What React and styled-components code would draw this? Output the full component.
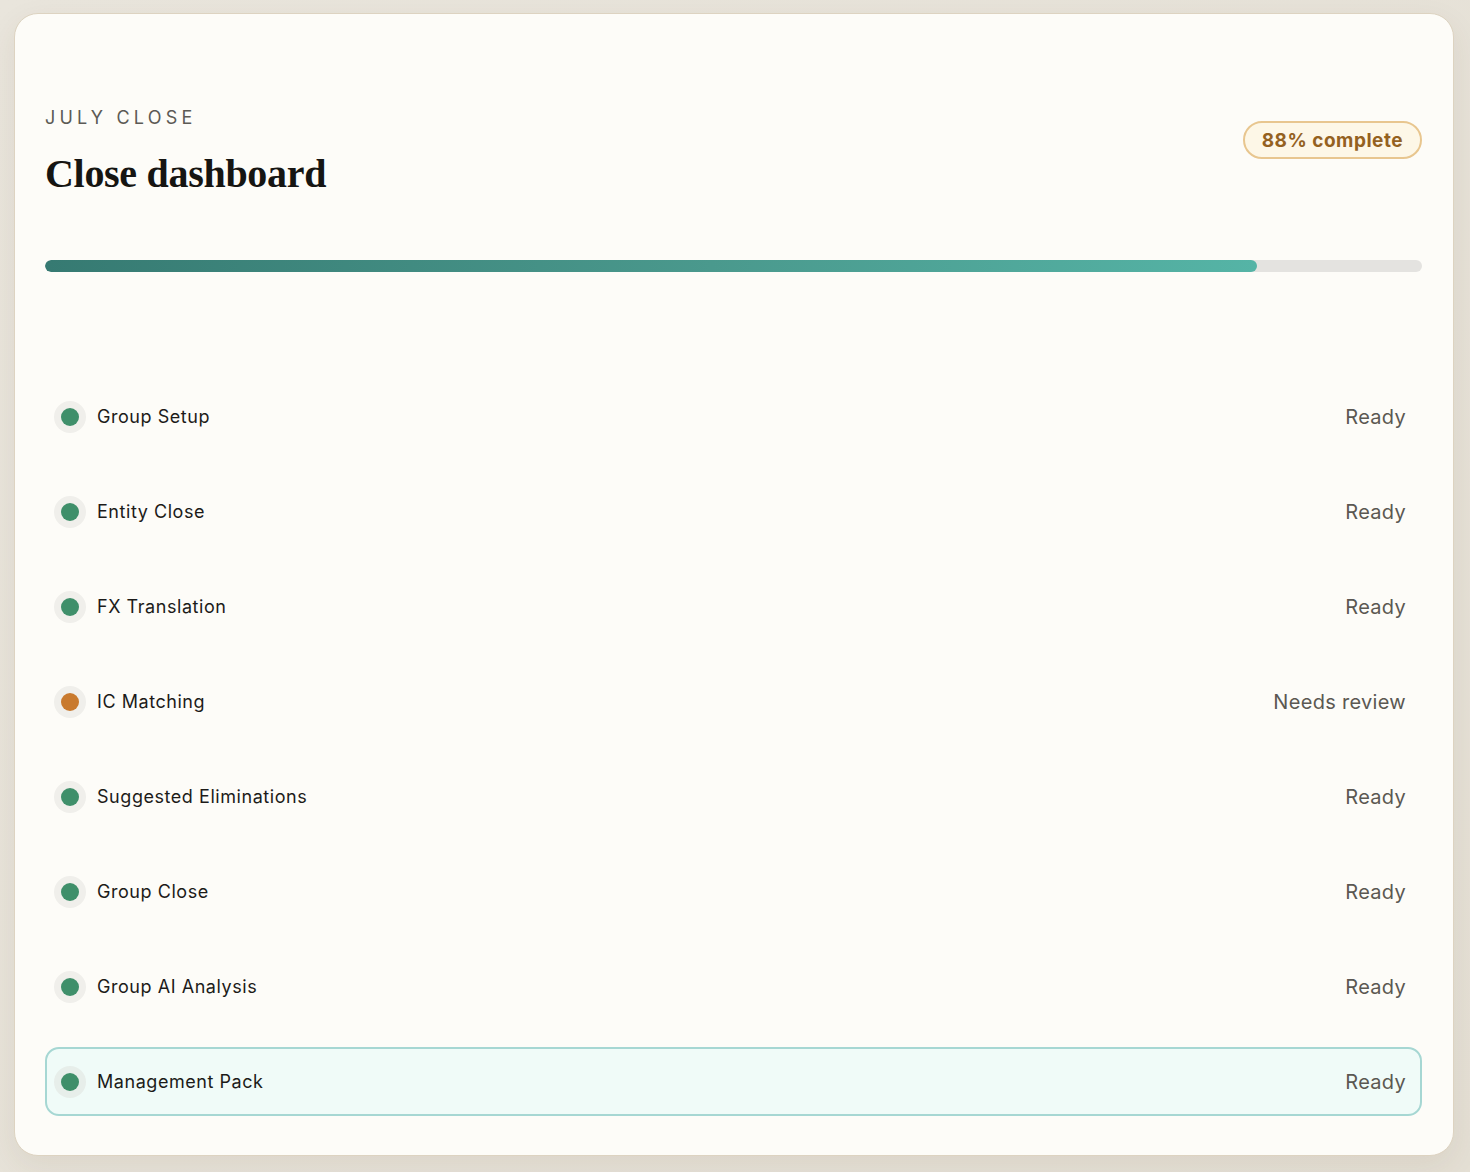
import React from 'react';
import styled, { createGlobalStyle } from 'styled-components';

const GlobalStyle = createGlobalStyle`
  html, body {
    margin: 0;
    padding: 0;
    background: #e7e2d8;
  }
  body {
    font-family: Inter, "Noto Sans", sans-serif;
    -webkit-font-smoothing: antialiased;
  }
`;

const Page = styled.div`
  min-height: 1172px;
  box-sizing: border-box;
  padding: 13px 16px 16px 14px;
  background: linear-gradient(135deg, #e9e5dc 0%, #e4dfd4 100%);
`;

const Card = styled.div`
  box-sizing: border-box;
  height: 1143px;
  background: #fdfcf8;
  border: 1px solid #ddd3c1;
  border-radius: 24px;
  box-shadow: 0 10px 30px rgba(90, 70, 40, 0.08);
  padding: 0 31px 0 30px;
`;

const Header = styled.div`
  display: flex;
  justify-content: space-between;
  align-items: flex-start;
  padding-top: 94px;
`;

const Eyebrow = styled.div`
  font-size: 18px;
  letter-spacing: 4.2px;
  color: #5c5a55;
  line-height: 20px;
`;

const Title = styled.h1`
  margin: 22px 0 0;
  font-family: "Liberation Serif", "Times New Roman", serif;
  font-weight: 700;
  font-size: 40px;
  line-height: 48px;
  color: #161512;
  letter-spacing: -0.3px;
`;

const Badge = styled.div`
  margin-top: 13px;
  height: 38px;
  box-sizing: border-box;
  padding: 0 17px;
  display: flex;
  align-items: center;
  border: 2px solid #e8c68f;
  border-radius: 19px;
  background: #fdf7e7;
  color: #94611f;
  font-weight: 700;
  font-size: 19px;
  letter-spacing: 0.5px;
`;

const Track = styled.div`
  margin-top: 62px;
  height: 12px;
  border-radius: 6px;
  background: #e4e3e0;
  overflow: hidden;
`;

const Fill = styled.div`
  height: 100%;
  border-radius: 6px;
  background: linear-gradient(90deg, #367a72 0%, #4a998d 55%, #55b4a6 100%);
`;

const List = styled.div`
  margin-top: 110px;
  display: flex;
  flex-direction: column;
  gap: 26px;
`;

const Row = styled.div`
  height: 69px;
  box-sizing: border-box;
  display: flex;
  align-items: center;
  justify-content: space-between;
  padding: 0 14px 0 7px;
  border: 2px solid ${p => (p.$active ? '#a6d7d3' : 'transparent')};
  border-radius: 14px;
  background: ${p => (p.$active ? '#f0fbf8' : 'transparent')};
`;

const Left = styled.div`
  display: flex;
  align-items: center;
  gap: 11px;
`;

const DotRing = styled.span`
  width: 32px;
  height: 32px;
  border-radius: 50%;
  background: ${p => (p.$active ? '#e7eeea' : '#f0efeb')};
  display: flex;
  align-items: center;
  justify-content: center;
`;

const Dot = styled.span`
  width: 18px;
  height: 18px;
  border-radius: 50%;
  background: ${p => (p.$warn ? '#c97a2e' : '#3f8f6a')};
`;

const Label = styled.span`
  font-size: 18px;
  color: #1c1b19;
  letter-spacing: 0.55px;
`;

const Status = styled.span`
  font-size: 20px;
  color: #5b5852;
  letter-spacing: 0.3px;
`;

const steps = [
  { name: 'Group Setup', status: 'Ready' },
  { name: 'Entity Close', status: 'Ready' },
  { name: 'FX Translation', status: 'Ready' },
  { name: 'IC Matching', status: 'Needs review', warn: true },
  { name: 'Suggested Eliminations', status: 'Ready' },
  { name: 'Group Close', status: 'Ready' },
  { name: 'Group AI Analysis', status: 'Ready' },
  { name: 'Management Pack', status: 'Ready', active: true },
];

const App = () => {
  const progress = 88;
  return (
    <>
      <GlobalStyle />
      <Page>
        <Card>
          <Header>
            <div>
              <Eyebrow>JULY CLOSE</Eyebrow>
              <Title>Close dashboard</Title>
            </div>
            <Badge>{progress}% complete</Badge>
          </Header>
          <Track>
            <Fill style={{ width: `${progress}%` }} />
          </Track>
          <List>
            {steps.map(s => (
              <Row key={s.name} $active={s.active}>
                <Left>
                  <DotRing $active={s.active}>
                    <Dot $warn={s.warn} />
                  </DotRing>
                  <Label>{s.name}</Label>
                </Left>
                <Status>{s.status}</Status>
              </Row>
            ))}
          </List>
        </Card>
      </Page>
    </>
  );
};

export default App;
